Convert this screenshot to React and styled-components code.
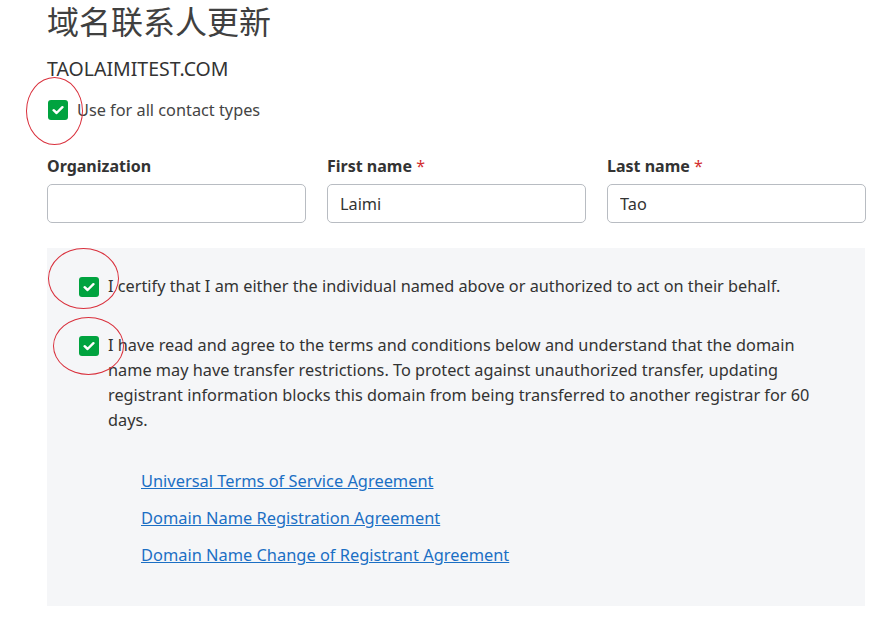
import styled, { createGlobalStyle } from "styled-components";

const GlobalStyle = createGlobalStyle`
  html, body {
    margin: 0;
    background: #fff;
  }
  body {
    font-family: "Noto Sans", "Noto Sans CJK SC", sans-serif;
    color: #333;
  }
`;

const CheckIcon = () => (
  <svg width="12" height="10" viewBox="0 0 12 10">
    <path d="M1.6 5.2 L4.6 8 L10.4 2.2" fill="none" stroke="#fff" strokeWidth="2.4" strokeLinecap="round" strokeLinejoin="round" />
  </svg>
);

const App = () => {
  return (
    <Page>
      <GlobalStyle />
      <Title>域名联系人更新</Title>
      <Domain>TAOLAIMITEST.COM</Domain>
      <CheckRow>
        <Mark $x={-21} $y={-23} $w={55} $h={66} />
        <Box><CheckIcon /></Box>
        <TopLabel>Use for all contact types</TopLabel>
      </CheckRow>

      <Fields>
        <Field>
          <FieldLabel>Organization</FieldLabel>
          <Input defaultValue="" />
        </Field>
        <Field>
          <FieldLabel>First name <Req>*</Req></FieldLabel>
          <Input defaultValue="Laimi" />
        </Field>
        <Field>
          <FieldLabel>Last name <Req>*</Req></FieldLabel>
          <Input defaultValue="Tao" />
        </Field>
      </Fields>

      <Panel>
        <Agree>
          <Mark $x={-31} $y={-29} $w={69} $h={59} />
          <Box><CheckIcon /></Box>
          <AgreeText>
            I certify that I am either the individual named above or authorized to act on their behalf.
          </AgreeText>
        </Agree>
        <Agree>
          <Mark $x={-26} $y={-19} $w={69} $h={56} />
          <Box><CheckIcon /></Box>
          <AgreeText>
            I have read and agree to the terms and conditions below and understand that the domain
            name may have transfer restrictions. To protect against unauthorized transfer, updating
            registrant information blocks this domain from being transferred to another registrar for 60
            days.
          </AgreeText>
        </Agree>
        <Links>
          <LinkItem href="#">Universal Terms of Service Agreement</LinkItem>
          <LinkItem href="#">Domain Name Registration Agreement</LinkItem>
          <LinkItem href="#">Domain Name Change of Registrant Agreement</LinkItem>
        </Links>
      </Panel>
    </Page>
  );
};

const Page = styled.div`
  padding: 0 25px 24px 47px;
  width: 818px;
`;

const Title = styled.h1`
  margin: 0;
  font-family: "Noto Sans CJK SC", sans-serif;
  font-weight: 400;
  font-size: 32px;
  line-height: 40px;
  color: #404040;
`;

const Domain = styled.div`
  margin-top: 16px;
  font-size: 19.5px;
  line-height: 26px;
  color: #333;
`;

const CheckRow = styled.label`
  position: relative;
  display: flex;
  align-items: center;
  gap: 9px;
  margin-top: 18px;
  height: 20px;
  padding-left: 1px;
`;

const Box = styled.span`
  flex: none;
  width: 20px;
  height: 20px;
  border-radius: 3px;
  background: #00a33f;
  display: flex;
  align-items: center;
  justify-content: center;
`;

const Mark = styled.span`
  position: absolute;
  left: ${(p) => p.$x}px;
  top: ${(p) => p.$y}px;
  width: ${(p) => p.$w}px;
  height: ${(p) => p.$h}px;
  border: 1px solid #d9303c;
  border-radius: 50%;
  pointer-events: none;
`;

const TopLabel = styled.span`
  font-size: 16.3px;
  color: #444;
`;

const Fields = styled.div`
  display: grid;
  grid-template-columns: repeat(3, 259px);
  column-gap: 21px;
  margin-top: 34px;
`;

const Field = styled.div`
  display: flex;
  flex-direction: column;
  gap: 6px;
`;

const FieldLabel = styled.div`
  font-size: 16px;
  font-weight: 700;
  line-height: 24px;
  color: #333;
`;

const Req = styled.span`
  color: #d32f2f;
  font-weight: 400;
`;

const Input = styled.input`
  box-sizing: border-box;
  height: 39px;
  border: 1px solid #b8bcc2;
  border-radius: 5px;
  padding: 0 12px;
  font-family: "Noto Sans", sans-serif;
  font-size: 16.3px;
  color: #333;
  outline: none;
`;

const Panel = styled.div`
  margin-top: 25px;
  width: 818px;
  box-sizing: border-box;
  background: #f5f6f8;
  padding: 29px 20px 39px 32px;
`;

const Agree = styled.label`
  position: relative;
  display: flex;
  align-items: flex-start;
  gap: 9px;
  & + & {
    margin-top: 37px;
  }
`;

const AgreeText = styled.p`
  margin: 0;
  width: 712px;
  font-size: 16.3px;
  line-height: 25px;
  color: #333;
  margin-top: -3px;
`;

const Links = styled.div`
  display: flex;
  flex-direction: column;
  align-items: flex-start;
  gap: 12px;
  margin-top: 35px;
  padding-left: 62px;
`;

const LinkItem = styled.a`
  font-size: 16.4px;
  line-height: 25px;
  color: #1b6fc4;
  text-decoration: underline;
`;

export default App;
